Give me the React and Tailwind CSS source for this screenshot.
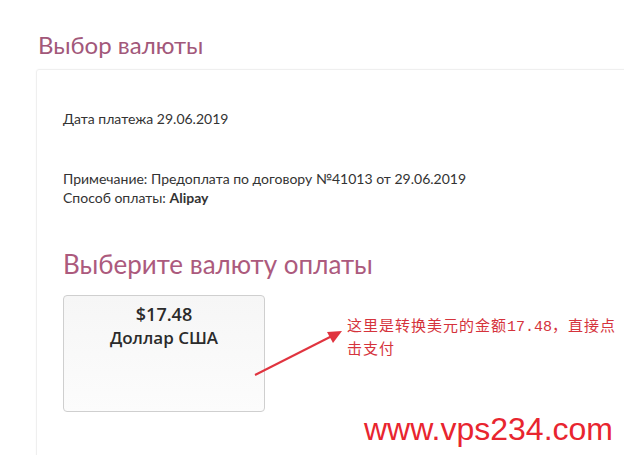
export default function App() {
  return (
    <div className="relative w-[624px] h-[455px] overflow-hidden bg-white font-['Lato',sans-serif] text-[#333]">
      <div className="pl-[38px] pt-[31px]">
        <h1 className="text-[24px] leading-[28px] font-normal text-[#a2587a]">Выбор валюты</h1>
        <div className="mt-[10px] ml-[-2px] w-[640px] h-[400px] border border-[#efefef] rounded-[3px] shadow-[0_0_2px_rgba(0,0,0,0.04)] pl-[26px] pt-[40px]">
          <p className="text-[14px] leading-[18px]">Дата платежа 29.06.2019</p>
          <div className="mt-[41px] text-[14px] leading-[19px]">
            <p>Примечание: Предоплата по договору №41013 от 29.06.2019</p>
            <p>Способ оплаты: <span className="font-bold">Alipay</span></p>
          </div>
          <h2 className="mt-[42px] text-[26px] leading-[30px] text-[#ac5a7d]">Выберите валюту оплаты</h2>
          <div className="mt-[16px] w-[202px] h-[117px] border border-[#cfcfcf] rounded-[4px] bg-gradient-to-b from-[#f6f6f6] to-[#fcfcfc] pt-[7px] text-center font-['Open_Sans',sans-serif] text-[#2b2b2b]">
            <div className="text-[18px] leading-[22px] font-semibold">$17.48</div>
            <div className="mt-[2px] text-[17px] leading-[22px] font-semibold">Доллар США</div>
          </div>
        </div>
      </div>

      <svg className="absolute left-0 top-0" width="624" height="455">
        <line x1="255" y1="375" x2="332" y2="336" stroke="#e0343f" strokeWidth="2" />
        <polygon points="342,331 327,332 333,343" fill="#e0343f" />
      </svg>

      <div className="absolute left-[347px] top-[315px] w-[272px] text-[15px] leading-[20px] tracking-[1px] text-[#d5333c] font-['Noto_Sans_CJK_SC',serif]">
        这里是转换美元的金额<span className="font-['Liberation_Mono',monospace] tracking-normal">17.48</span>，直接点击支付
      </div>

      <div className="absolute left-[364px] top-[410px] text-[32px] leading-[38px] text-[#e8252f] font-['Liberation_Sans',sans-serif]">
        www.vps234.com
      </div>
    </div>
  )
}
